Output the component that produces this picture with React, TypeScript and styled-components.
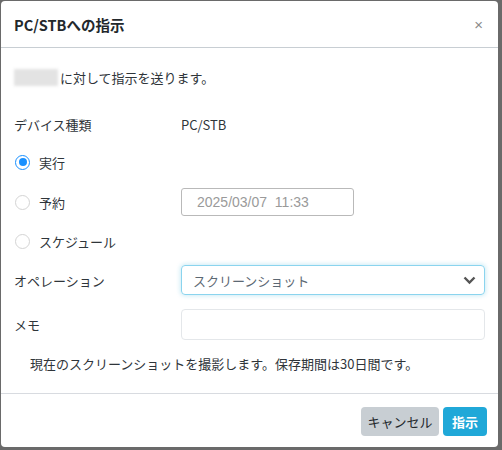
import styled, { createGlobalStyle } from "styled-components";

const Global = createGlobalStyle`
  html, body {
    margin: 0;
    padding: 0;
    background: #6a6a6a;
  }
  body {
    font-family: "Noto Sans CJK JP", "Noto Sans", sans-serif;
    font-size: 13px;
    color: #2f353a;
  }
`;

const Modal = styled.div`
  width: 497px;
  height: 446px;
  margin: 1px 0 0 1px;
  background: #fff;
  border-radius: 4px;
  display: flex;
  flex-direction: column;
  overflow: hidden;
`;

const Header = styled.div`
  height: 46px;
  display: flex;
  align-items: center;
  justify-content: space-between;
  padding: 0 13px;
  border-bottom: 1px solid #c8ced3;
`;

const Title = styled.h5`
  margin: 0;
  font-size: 14.5px;
  font-weight: 600;
  color: #23282c;
`;

const Close = styled.button`
  border: none;
  background: none;
  padding: 0;
  margin-right: 2px;
  font-size: 15px;
  line-height: 1;
  color: #8a8a8a;
  font-family: "Liberation Sans", sans-serif;
`;

const Body = styled.div`
  padding: 0 13px;
  display: flex;
  flex-direction: column;
  flex: 1;
  border-bottom: 1px solid #d8dbe0;
`;

const Row = styled.div<{ $top: number; $h: number }>`
  display: flex;
  align-items: center;
  margin-top: ${(p) => p.$top}px;
  height: ${(p) => p.$h}px;
`;

const Label = styled.div`
  width: 167px;
  flex-shrink: 0;
`;

const Masked = styled.span`
  display: inline-block;
  width: 44px;
  height: 17px;
  margin-right: 2px;
  background: #e3e3e3;
  filter: blur(1.5px);
`;

const RadioLabel = styled.label`
  display: flex;
  align-items: center;
  gap: 9px;
  width: 167px;
`;

const RadioDot = styled.span<{ $on?: boolean }>`
  width: 15px;
  height: 15px;
  box-sizing: border-box;
  border-radius: 50%;
  margin-left: 1px;
  border: 1px solid ${(p) => (p.$on ? "#1890ff" : "#d4d4d4")};
  display: flex;
  align-items: center;
  justify-content: center;
  &::after {
    content: "";
    width: 8px;
    height: 8px;
    border-radius: 50%;
    background: ${(p) => (p.$on ? "#1890ff" : "transparent")};
  }
`;

const DateBox = styled.div`
  width: 173px;
  height: 28px;
  box-sizing: border-box;
  border: 1px solid #b9b9b9;
  border-radius: 3px;
  padding-left: 15px;
  display: flex;
  align-items: center;
  color: #9a9a9a;
  font-family: "Liberation Sans", sans-serif;
  font-size: 14px;
  white-space: pre;
`;

const Select = styled.div`
  width: 305px;
  height: 30px;
  box-sizing: border-box;
  border: 1px solid #8ad4ee;
  border-radius: 4px;
  box-shadow: 0 0 4px 1px rgba(32, 168, 216, 0.22);
  padding: 0 8px 0 11px;
  display: flex;
  align-items: center;
  justify-content: space-between;
  color: #5c6873;
`;

const Input = styled.div`
  width: 305px;
  height: 31px;
  box-sizing: border-box;
  border: 1px solid #e4e7ea;
  border-radius: 4px;
`;

const Help = styled.div`
  padding-left: 16px;
`;

const Footer = styled.div`
  display: flex;
  justify-content: flex-end;
  gap: 4px;
  padding: 13px 11px 0 0;
  height: 40px;
`;

const Button = styled.button<{ $primary?: boolean }>`
  height: 29px;
  width: ${(p) => (p.$primary ? 44 : 78)}px;
  border: none;
  border-radius: 4px;
  padding: 0;
  font-family: "Noto Sans CJK JP", sans-serif;
  font-size: 13px;
  font-weight: ${(p) => (p.$primary ? 700 : 400)};
  background: ${(p) => (p.$primary ? "#20a8d8" : "#c8ced3")};
  color: ${(p) => (p.$primary ? "#fff" : "#23282c")};
`;

export default function App() {
  return (
    <>
      <Global />
      <Modal>
        <Header>
          <Title>PC/STBへの指示</Title>
          <Close>×</Close>
        </Header>
        <Body>
          <Row $top={19} $h={20}>
            <Masked />
            に対して指示を送ります。
          </Row>
          <Row $top={27} $h={20}>
            <Label>デバイス種類</Label>
            <span>PC/STB</span>
          </Row>
          <Row $top={18} $h={20}>
            <RadioLabel>
              <RadioDot $on />
              実行
            </RadioLabel>
          </Row>
          <Row $top={16} $h={28}>
            <RadioLabel>
              <RadioDot />
              予約
            </RadioLabel>
            <DateBox>{"2025/03/07  11:33"}</DateBox>
          </Row>
          <Row $top={15} $h={20}>
            <RadioLabel>
              <RadioDot />
              スケジュール
            </RadioLabel>
          </Row>
          <Row $top={14} $h={30}>
            <Label>オペレーション</Label>
            <Select>
              <span>スクリーンショット</span>
              <svg width="13" height="9" viewBox="0 0 13 9">
                <polyline
                  points="1.5,1.5 6.5,6.5 11.5,1.5"
                  fill="none"
                  stroke="#555"
                  strokeWidth="2.4"
                />
              </svg>
            </Select>
          </Row>
          <Row $top={14} $h={31}>
            <Label>メモ</Label>
            <Input />
          </Row>
          <Row $top={13} $h={20}>
            <Help>現在のスクリーンショットを撮影します。保存期間は30日間です。</Help>
          </Row>
        </Body>
        <Footer>
          <Button>キャンセル</Button>
          <Button $primary>指示</Button>
        </Footer>
      </Modal>
    </>
  );
}
